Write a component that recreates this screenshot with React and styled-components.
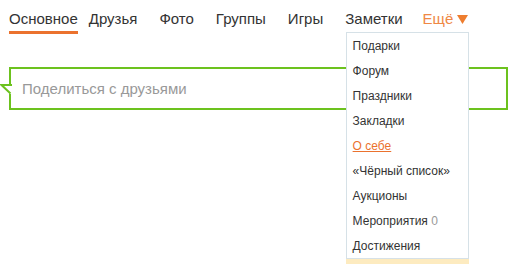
import React from 'react';
import styled, { createGlobalStyle } from 'styled-components';

const GlobalStyle = createGlobalStyle`
  body {
    margin: 0;
    background: #fff;
    font-family: Arial, "Liberation Sans", sans-serif;
    color: #333;
  }
`;

const tabs = ['Основное', 'Друзья', 'Фото', 'Группы', 'Игры', 'Заметки'];

const menu = [
  { label: 'Подарки' },
  { label: 'Форум' },
  { label: 'Праздники' },
  { label: 'Закладки' },
  { label: 'О себе', link: true },
  { label: '«Чёрный список»' },
  { label: 'Аукционы' },
  { label: 'Мероприятия', count: 0 },
  { label: 'Достижения' },
];

const App = () => {
  return (
    <Page>
      <GlobalStyle />
      <Nav>
        {tabs.map((t, i) => (
          <Tab key={t} $active={i === 0}>
            {t}
          </Tab>
        ))}
        <More>
          Ещё
          <Arrow width="11" height="9" viewBox="0 0 11 9">
            <polygon points="0,0 11,0 5.5,9" fill="#ee7d2f" />
          </Arrow>
          <Dropdown>
            {menu.map((m) => (
              <MenuItem key={m.label} $link={m.link}>
                <span>{m.label}</span>
                {m.count !== undefined && <Count> {m.count}</Count>}
              </MenuItem>
            ))}
            <MenuFooter />
          </Dropdown>
        </More>
      </Nav>

      <ShareBox>
        <Tail width="12" height="11" viewBox="0 0 12 11">
          <polygon points="1,0 12,0 12,10 10,10" fill="#fff" />
          <path d="M12 1 H1.5 L10.5 9.5" fill="none" stroke="#6cc21e" strokeWidth="2" />
        </Tail>
        <Placeholder>Поделиться с друзьями</Placeholder>
      </ShareBox>
    </Page>
  );
};

export default App;

const Page = styled.div`
  padding: 10px 12px 0 9px;
  width: 520px;
  height: 264px;
  overflow: hidden;
  box-sizing: border-box;
`;

const Nav = styled.div`
  display: flex;
  align-items: flex-start;
  position: relative;
  z-index: 2;
`;

const Tab = styled.div`
  font-size: 15px;
  line-height: 18px;
  padding-bottom: 3px;
  margin-right: ${(p) => (p.$active ? '11px' : '22px')};
  color: #333;
  border-bottom: 3px solid ${(p) => (p.$active ? '#eb722e' : 'transparent')};
  white-space: nowrap;
`;

const More = styled.div`
  position: relative;
  display: flex;
  align-items: center;
  gap: 4px;
  margin-left: -2px;
  font-size: 15px;
  line-height: 18px;
  color: #ef8845;
  white-space: nowrap;
`;

const Arrow = styled.svg`
  display: block;
  margin-top: 1px;
`;

const Dropdown = styled.div`
  position: absolute;
  top: 22px;
  left: -77px;
  width: 121px;
  background: #fff;
  border: 1px solid #d6e1e7;
  padding-top: 1px;
`;

const MenuItem = styled.div`
  font-size: 12px;
  line-height: 25px;
  padding-left: 6px;
  color: ${(p) => (p.$link ? '#eb722e' : '#333')};
  text-decoration: ${(p) => (p.$link ? 'underline' : 'none')};
  white-space: nowrap;
`;

const Count = styled.span`
  color: #999;
`;

const MenuFooter = styled.div`
  height: 8px;
  margin: 0 -1px -9px;
  background: #fdebc0;
`;

const ShareBox = styled.div`
  position: relative;
  margin-top: 33px;
  height: 39px;
  border: 2px solid #6cc21e;
  display: flex;
  align-items: center;
  padding-left: 11px;
`;

const Tail = styled.svg`
  position: absolute;
  left: -11px;
  top: 15px;
  display: block;
`;

const Placeholder = styled.div`
  font-size: 15px;
  color: #999;
`;
